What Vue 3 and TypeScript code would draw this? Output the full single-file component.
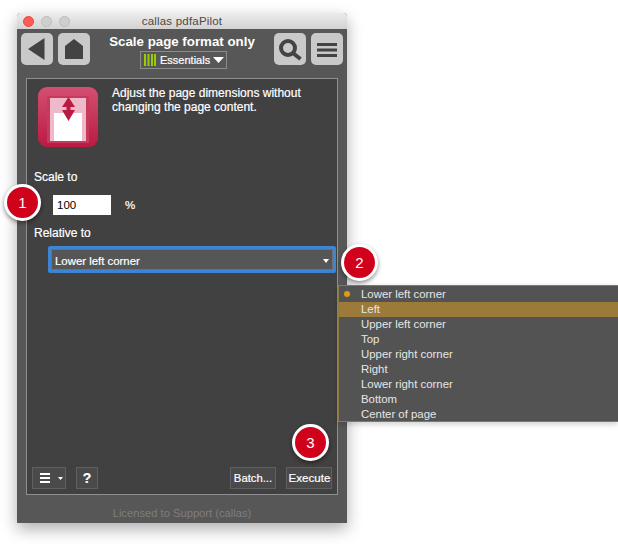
<script setup lang="ts">
const items: string[] = ['Lower left corner', 'Left', 'Upper left corner', 'Top', 'Upper right corner', 'Right', 'Lower right corner', 'Bottom', 'Center of page']
</script>

<template>
  <div class="page">
    <div class="window">
      <div class="titlebar">
        <div class="lights"><i class="red"></i><i></i><i></i></div>
        <span class="title">callas pdfaPilot</span>
      </div>
      <div class="toolbar">
        <button class="tool">
          <svg width="32" height="32" viewBox="0 0 32 32"><path d="M7 16 23.500 5V27Z" fill="#434343"/></svg>
        </button>
        <button class="tool">
          <svg width="32" height="32" viewBox="0 0 32 32"><path d="M16 6 25 13V26H7V13Z" fill="#434343"/></svg>
        </button>
        <div class="heading">
          <div class="heading-title">Scale page format only</div>
          <div class="profile">
            <svg width="14" height="12" viewBox="0 0 14 12"><path d="M1 0H3V12H1ZM4.500 0H6.500V12H4.500ZM8 0H10V12H8ZM11 0H13V12H11Z" fill="#9acb08"/></svg>
            <span>Essentials</span>
            <svg width="11" height="6" viewBox="0 0 11 6"><path d="M0 0H11L5.500 6Z" fill="#fff"/></svg>
          </div>
        </div>
        <button class="tool">
          <svg width="32" height="32" viewBox="0 0 32 32"><circle cx="14" cy="15" r="7" fill="none" stroke="#434343" stroke-width="4"/><path d="M19.500 20.500 26.500 26" stroke="#434343" stroke-width="4"/></svg>
        </button>
        <button class="tool">
          <svg width="32" height="32" viewBox="0 0 32 32"><path d="M6 11.500H26M6 17H26M6 22.500H26" stroke="#434343" stroke-width="3"/></svg>
        </button>
      </div>

      <div class="panel">
        <div class="intro">
          <div class="app-icon">
            <div class="sheet">
              <div class="paper"></div>
              <svg class="arrows" width="13" height="24" viewBox="0 0 13 24"><path d="M6.500 0 13 10H8.500V13H13L6.500 24 0 13H4.500V10H0Z" fill="#bb1a43"/></svg>
            </div>
          </div>
          <p class="desc">Adjust the page dimensions without changing the page content.</p>
        </div>

        <div class="label scale-label">Scale to</div>
        <div class="scale-row">
          <input class="num" value="100" />
          <span class="pct">%</span>
        </div>
        <div class="label rel-label">Relative to</div>
        <div class="select-ring">
          <div class="select">
            <span>Lower left corner</span>
            <svg width="6" height="4" viewBox="0 0 6 4"><path d="M0 0H6L3 4Z" fill="#fff"/></svg>
          </div>
        </div>

        <div class="actions">
          <button class="act menu-btn">
            <svg width="10" height="10" viewBox="0 0 10 10"><path d="M0 1H10M0 5H10M0 9H10" stroke="#fff" stroke-width="2"/></svg>
            <svg width="5" height="3" viewBox="0 0 5 3"><path d="M0 0H5L2.500 3Z" fill="#fff"/></svg>
          </button>
          <button class="act help">?</button>
          <div class="spacer"></div>
          <button class="act text-btn">Batch...</button>
          <button class="act text-btn exec">Execute</button>
        </div>
      </div>

      <div class="footer">Licensed to Support (callas)</div>
    </div>

    <ul class="dropdown">
      <li v-for="(item, i) in items" :key="item" :class="{ hover: i === 1 }">
        <i v-if="i === 0" class="dot"></i>{{ item }}
      </li>
    </ul>

    <div class="badge b1">1</div>
    <div class="badge b2">2</div>
    <div class="badge b3">3</div>
  </div>
</template>

<style scoped>
.page {
  position: relative;
  width: 618px;
  height: 544px;
  padding: 13px 0 0 17px;
  box-sizing: border-box;
  overflow: hidden;
  background: #fff;
  font-family: "Liberation Sans", Arial, sans-serif;
}
.window {
  width: 330px;
  height: 510px;
  background: #575757;
  box-shadow: 0 6px 16px rgba(0, 0, 0, .32);
  border-radius: 4px 4px 0 0;
  display: flex;
  flex-direction: column;
}
.titlebar {
  height: 16px;
  flex: none;
  position: relative;
  background: linear-gradient(#ececec, #d4d2d3);
  border-radius: 4px 4px 0 0;
  display: flex;
  justify-content: center;
  align-items: center;
}
.lights {
  position: absolute;
  left: 6px;
  top: 3px;
  display: flex;
  gap: 7px;
}
.lights i {
  width: 11px;
  height: 11px;
  box-sizing: border-box;
  border-radius: 50%;
  background: #d0cfd0;
  border: 1px solid #bdbcbd;
}
.lights i.red {
  background: #fc5b57;
  border-color: #e5483f;
}
.title {
  font-size: 11.5px;
  color: #4a4a4a;
  letter-spacing: .2px;
}
.toolbar {
  height: 49px;
  flex: none;
  box-sizing: border-box;
  padding: 4px 4px 0;
  display: flex;
  gap: 5px;
  align-items: flex-start;
}
.tool {
  width: 32px;
  height: 32px;
  flex: none;
  padding: 0;
  border: 0;
  border-radius: 5px;
  background: #c9c9c9;
}
.tool svg {
  display: block;
}
.heading {
  flex: 1;
  display: flex;
  flex-direction: column;
  align-items: center;
  color: #fff;
}
.heading-title {
  margin-top: 1px;
  font-size: 13.300px;
  font-weight: 700;
  line-height: 15px;
  white-space: nowrap;
}
.profile {
  margin: 2px 0 0 3px;
  width: 87px;
  height: 18px;
  box-sizing: border-box;
  border: 1px solid #8b8b8b;
  padding-left: 2px;
  display: flex;
  align-items: center;
  gap: 3px;
  font-size: 11px;
  -webkit-text-stroke: .2px #fff;
}
.panel {
  width: 312px;
  height: 417px;
  margin-left: 9px;
  box-sizing: border-box;
  border: 1px solid #8f8f8f;
  background: #414141;
  color: #fff;
  display: flex;
  flex-direction: column;
  position: relative;
}
.intro {
  display: flex;
  padding: 8px 0 0 11px;
  height: 68px;
  flex: none;
}
.app-icon {
  width: 60px;
  height: 60px;
  flex: none;
  box-sizing: border-box;
  padding: 9px 9px 4px;
  border-radius: 9px;
  background: linear-gradient(#d34f71, #bb1a43);
}
.sheet {
  height: 100%;
  box-sizing: border-box;
  border: 3px solid #c63a5d;
  border-top-width: 2px;
  border-bottom-width: 2px;
  background: #eeb9c8;
  position: relative;
  display: flex;
  align-items: flex-end;
  padding: 0 4px;
}
.paper {
  width: 100%;
  height: 28px;
  background: #fff;
}
.arrows {
  position: absolute;
  left: 12px;
  top: -1px;
}
.desc {
  margin: -1px 0 0 14px;
  width: 215px;
  font-size: 12px;
  line-height: 14px;
  font-weight: 400;
  -webkit-text-stroke: .2px #fff;
}
.label {
  font-size: 12px;
  line-height: 14px;
  margin-left: 7px;
  -webkit-text-stroke: .2px #fff;
}
.scale-label {
  margin-top: 15px;
}
.scale-row {
  margin: 11px 0 0 26px;
  display: flex;
  align-items: center;
  gap: 14px;
}
.num {
  width: 58px;
  height: 20px;
  box-sizing: border-box;
  border: 0;
  padding: 0 0 0 4px;
  background: #fff;
  color: #000;
  font: 11.5px "Liberation Sans", Arial, sans-serif;
  outline: none;
}
.pct {
  font-size: 11.5px;
  -webkit-text-stroke: .2px #fff;
}
.rel-label {
  margin-top: 11px;
}
.select-ring {
  margin: 6px 0 0 21px;
  width: 288px;
  height: 27px;
  box-sizing: border-box;
  border: 3px solid #3d84d2;
  border-radius: 2px;
  padding: 0;
}
.select {
  height: 100%;
  box-sizing: border-box;
  border: 1px solid #707070;
  background: #565656;
  padding: 2px 3px 0 3px;
  display: flex;
  align-items: center;
  justify-content: space-between;
  font-size: 11.4px;
  -webkit-text-stroke: .2px #fff;
}
.actions {
  margin-top: auto;
  padding: 0 5px 5px;
  display: flex;
  gap: 10px;
}
.spacer {
  flex: 1;
}
.act {
  height: 22px;
  box-sizing: border-box;
  padding: 0;
  border: 1px solid #5f5f5f;
  background: #4a4a4a;
  color: #fff;
  font: 11.3px "Liberation Sans", Arial, sans-serif;
  -webkit-text-stroke: .2px #fff;
}
.menu-btn {
  width: 34px;
  display: flex;
  align-items: center;
  gap: 8px;
  padding-left: 7px;
}
.help {
  width: 22px;
  font-size: 14px;
  font-weight: 700;
}
.text-btn {
  width: 46px;
  padding-bottom: 1px;
}
.exec {
  font-size: 11.6px;
  padding-left: 1px;
}
.footer {
  flex: 1;
  display: flex;
  align-items: center;
  justify-content: center;
  padding-top: 8px;
  font-size: 11.2px;
  color: #7e7e7e;
}
.dropdown {
  position: absolute;
  left: 338px;
  top: 285px;
  width: 280px;
  height: 137px;
  box-sizing: border-box;
  margin: 0;
  padding: 1px 0;
  list-style: none;
  background: #535353;
  border: 1px solid #8f7a42;
  border-right-width: 0;
  box-shadow: 0 2px 6px rgba(0, 0, 0, .2);
  color: #e6e6e6;
  font-size: 11.4px;
}
.dropdown li {
  height: 15px;
  line-height: 15px;
  padding-left: 22px;
  position: relative;
}
.dropdown li.hover {
  background: #9b7a3a;
}
.dot {
  position: absolute;
  left: 5px;
  top: 4px;
  width: 6px;
  height: 6px;
  border-radius: 50%;
  background: #e19b0b;
}
.badge {
  position: absolute;
  width: 37px;
  height: 37px;
  box-sizing: border-box;
  border: 3px solid #fff;
  border-radius: 50%;
  background: #d0021b;
  color: #fff;
  font-size: 15px;
  display: flex;
  align-items: center;
  justify-content: center;
  box-shadow: 0 2px 4px rgba(0, 0, 0, .45);
}
.b1 { left: 4px; top: 184px; }
.b2 { left: 341px; top: 244px; }
.b3 { left: 292px; top: 424px; }
</style>

<style>
html, body { background: #fff; }
</style>
